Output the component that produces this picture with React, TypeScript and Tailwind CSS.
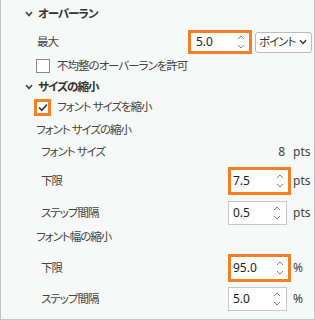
import React from "react";

const Chevron = () => (
  <svg width="8" height="6" viewBox="0 0 8 6" className="shrink-0">
    <path d="M1 1.2 L4 4.4 L7 1.2" stroke="#505050" strokeWidth="1.7" fill="none" />
  </svg>
);

const Spin = () => (
  <svg width="8" height="18" viewBox="0 0 8 18" className="shrink-0">
    <path d="M1 6 L4 3 L7 6" stroke="#808080" strokeWidth="1" fill="none" />
    <path d="M1 12 L4 15 L7 12" stroke="#808080" strokeWidth="1" fill="none" />
  </svg>
);

function NumBox({ value, hl }: { value: string; hl?: boolean }) {
  if (hl) {
    return (
      <div className="flex h-[28px] w-[63px] items-center justify-between border-[3px] border-[#f47f24] bg-white pl-[2px] pr-[4px] text-[12px] tracking-normal">
        <span className="text-[#222]">{value}</span>
        <Spin />
      </div>
    );
  }
  return (
    <div className="flex h-[24px] w-[59px] items-center justify-between border border-[#c8c8c8] bg-white pl-[4px] pr-[5px] text-[12px] tracking-normal">
      <span className="text-[#222]">{value}</span>
      <Spin />
    </div>
  );
}

function Row({
  label,
  h,
  children,
  unit,
}: {
  label: string;
  h: string;
  children?: React.ReactNode;
  unit?: string;
}) {
  return (
    <div className={`grid grid-cols-[187px_65px_1fr] items-center pl-[40px] ${h}`}>
      <span className="whitespace-nowrap text-[#444]">{label}</span>
      <div className="flex items-center">{children}</div>
      <span className="text-[12px] tracking-normal text-[#444]">{unit}</span>
    </div>
  );
}

export default function App() {
  return (
    <div className="h-[320px] w-[315px] overflow-hidden border-b border-l border-r border-[#c4c4c4] bg-[#f7f8f8] font-['Noto_Sans','Noto_Sans_CJK_JP',sans-serif] text-[11.5px] leading-none tracking-[-1px] [font-feature-settings:'palt']">
      {/* オーバーラン */}
      <div className="flex h-[28px] items-center gap-[5px] pl-[24px]">
        <Chevron />
        <span className="font-bold text-[#333]">オーバーラン</span>
      </div>
      {/* 最大 */}
      <div className="flex h-[28px] items-center pl-[36px] pr-[2px]">
        <span className="text-[#444]">最大</span>
        <div className="ml-auto flex items-center gap-[3px]">
          <div className="flex h-[24px] w-[64px] items-center justify-between border-[3px] border-[#f47f24] bg-white pl-[5px] pr-[4px] text-[12px] tracking-normal">
            <span className="text-[#222]">5.0</span>
            <Spin />
          </div>
          <div className="flex h-[21px] w-[57px] items-center justify-between rounded-[3px] border border-[#bdbdbd] bg-white pl-[3px] pr-[4px]">
            <span className="whitespace-nowrap text-[#333]">ポイント</span>
            <svg width="8" height="6" viewBox="0 0 8 6" className="shrink-0">
              <path d="M1 1.2 L4 4.4 L7 1.2" stroke="#333" strokeWidth="1.4" fill="none" />
            </svg>
          </div>
        </div>
      </div>
      {/* 不均整 */}
      <div className="flex h-[20px] items-center pl-[35px]">
        <div className="h-[14px] w-[14px] border border-[#8a8a8a] bg-white" />
        <span className="ml-[7px] text-[#444]">不均整のオーバーランを許可</span>
      </div>
      {/* サイズの縮小 */}
      <div className="flex h-[21px] items-center gap-[5px] pl-[24px]">
        <Chevron />
        <span className="font-bold text-[#333]">サイズの縮小</span>
      </div>
      {/* フォント サイズを縮小 */}
      <div className="flex h-[20px] items-center pl-[33px]">
        <div className="flex h-[17px] w-[17px] items-center justify-center border-[3px] border-[#f47f24] bg-white">
          <svg width="10" height="9" viewBox="0 0 10 9">
            <path d="M1 4.5 L3.8 7.3 L9 1.5" stroke="#333" strokeWidth="1.6" fill="none" />
          </svg>
        </div>
        <span className="ml-[6px] text-[#444]">フォント サイズを縮小</span>
      </div>
      {/* フォント サイズの縮小 */}
      <div className="flex h-[26px] items-center pl-[35px]">
        <span className="text-[#444]">フォント サイズの縮小</span>
      </div>
      <Row label="フォント サイズ" h="h-[18px]" unit="pts">
        <span className="w-[59px] pr-[2px] text-right text-[12px] tracking-normal text-[#444]">8</span>
      </Row>
      <Row label="下限" h="h-[40px]" unit="pts">
        <NumBox value="7.5" hl />
      </Row>
      <Row label="ステップ間隔" h="h-[24px]" unit="pts">
        <NumBox value="0.5" />
      </Row>
      <div className="flex h-[24px] items-center pl-[35px]">
        <span className="text-[#444]">フォント幅の縮小</span>
      </div>
      <Row label="下限" h="h-[38px]" unit="%">
        <NumBox value="95.0" hl />
      </Row>
      <Row label="ステップ間隔" h="h-[24px]" unit="%">
        <NumBox value="5.0" />
      </Row>
    </div>
  );
}
